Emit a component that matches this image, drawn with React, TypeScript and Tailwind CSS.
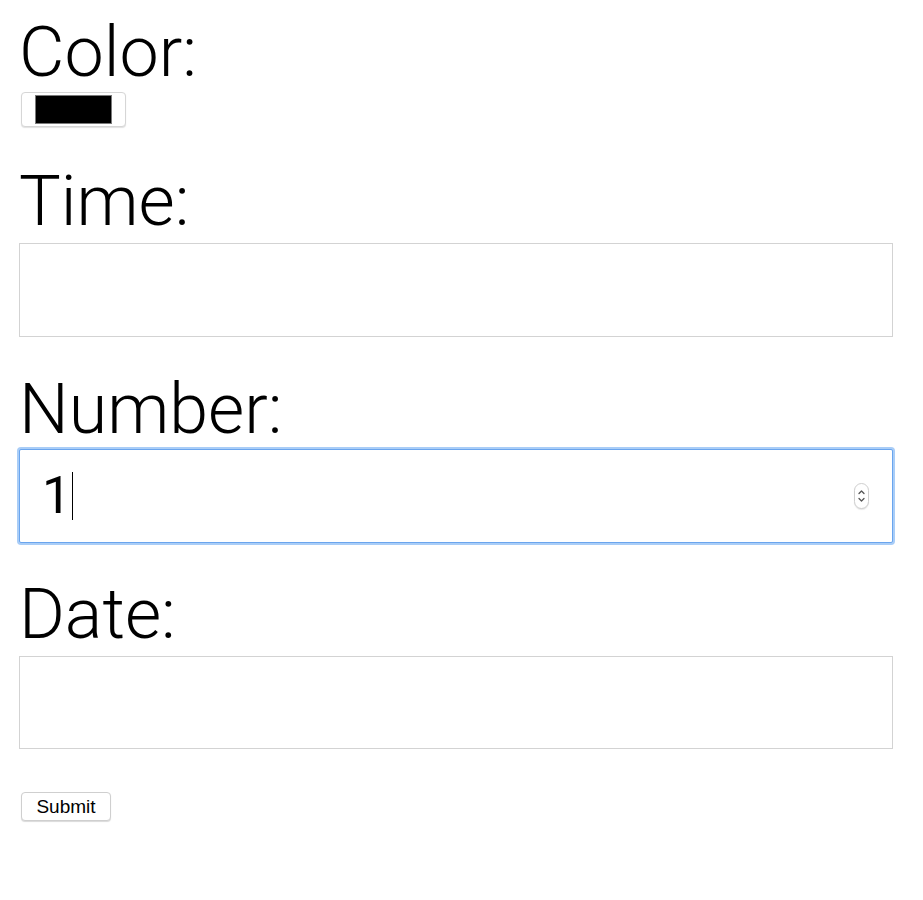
import React from 'react';

const labelCls =
  "block h-[80px] text-[70px] leading-[80px] font-light text-black [font-family:Roboto,'Liberation_Sans',sans-serif]";

export default function App() {
  return (
    <div className="min-h-[900px] bg-white pl-[19px] pt-[12px] [font-family:'Liberation_Sans',Arial,sans-serif]">
      <form className="flex flex-col items-start" onSubmit={(e) => e.preventDefault()}>
        {/* Color */}
        <label className={labelCls}>Color:</label>
        <div className="ml-[2px] flex h-[35px] w-[105px] items-center justify-center rounded-[4px] border border-[#d6d6d6] bg-white shadow-[0_1px_1px_rgba(0,0,0,0.12)]">
          <div className="h-[29px] w-[77px] border border-[#7a7a7a] bg-black" />
        </div>

        {/* Time */}
        <label className={`${labelCls} mt-[34px]`}>Time:</label>
        <div className="mt-[2px] h-[94px] w-[874px] border border-[#d3d3d3] bg-white" />

        {/* Number */}
        <label className={`${labelCls} mt-[32px]`}>Number:</label>
        <div className="relative flex h-[94px] w-[874px] items-center rounded-[2px] border border-[#6aa5ee] bg-white pl-[22px] shadow-[0_0_0_2px_#a9cdf7]">
          <span className="text-[52px] leading-none font-normal text-black [font-family:Roboto,'Liberation_Sans',sans-serif]">1</span>
          <span className="ml-[1px] h-[48px] w-[1px] bg-black" />
          <div className="absolute right-[23px] top-[33px] flex h-[26px] w-[15px] flex-col items-center justify-center rounded-full border border-[#cfcfcf] bg-white shadow-[0_1px_1px_rgba(0,0,0,0.1)]">
            <svg width="9" height="18" viewBox="0 0 9 18" fill="none" stroke="#555" strokeWidth="1.3" strokeLinecap="round" strokeLinejoin="round">
              <path d="M2 6.5 L4.5 4 L7 6.5" />
              <path d="M2 11.5 L4.5 14 L7 11.5" />
            </svg>
          </div>
        </div>

        {/* Date */}
        <label className={`${labelCls} mt-[31px]`}>Date:</label>
        <div className="mt-[2px] h-[93px] w-[874px] border border-[#d3d3d3] bg-white" />

        <button
          type="submit"
          className="mt-[43px] ml-[2px] flex h-[29px] w-[90px] items-center justify-center rounded-[4px] border border-[#cfcfcf] bg-white text-[19px] leading-none text-black shadow-[0_1px_1px_rgba(0,0,0,0.15)]"
        >
          Submit
        </button>
      </form>
    </div>
  );
}
